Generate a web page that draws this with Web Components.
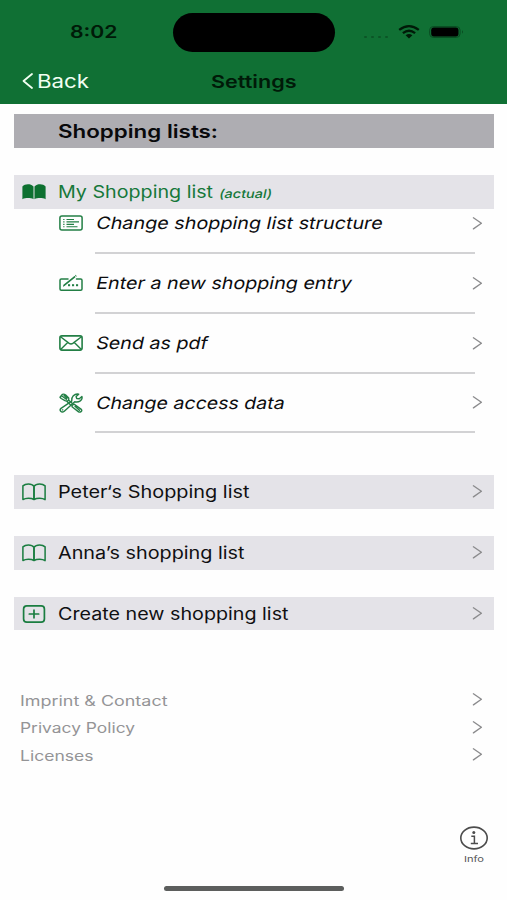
<!DOCTYPE html>
<html lang="en">
<head>
<meta charset="utf-8">
<title>Settings</title>
<style>
html,body{margin:0;background:#fefefe;overflow:hidden}
body{font-family:Inter,"Liberation Sans",sans-serif;color:#101012}
</style>
</head>
<body>
<settings-screen></settings-screen>
<script>
// Single line of text, set wide: the glyphs are stretched to the width given.
// With the slant attribute the upright glyphs are leaned to the right.
customElements.define('wide-text', class extends HTMLElement {
  connectedCallback() {
    if (this.shadowRoot) return;
    const w = +this.getAttribute('w'), s = this.getAttribute('size') || 17;
    this.attachShadow({mode:'open'}).innerHTML = `<style>
      :host{display:block;flex:none;width:${w}px;height:24px}
      span{display:inline-block;white-space:pre;font-size:${s}px;line-height:25.500px;transform-origin:0 75%}
    </style><span><slot></slot></span>`;
    const span = this.shadowRoot.querySelector('span');
    const slant = this.hasAttribute('slant');
    const k = (slant ? w - 1.5 : w) / span.getBoundingClientRect().width;
    span.style.transform = (slant ? 'skewX(-12deg) ' : '') + `scaleX(${k})`;
  }
});

const icons = {
  open: [24,18,'<path d="M12 3.2C10.6 1.3 8.6.9 6.4.9 4.2.9 2.4 1.4.9 2.9V16.6c1.7-1.2 3.5-1.4 5.5-1.4s4 .3 5.6 1.3c1.6-1 3.6-1.3 5.6-1.3s3.8.2 5.5 1.4V2.9C21.600 1.4 19.800.9 17.600.9 15.400.9 13.400 1.300 12 3.200ZV16.500" fill="none" stroke="#1a7d40" stroke-width="1.5" stroke-linejoin="round"/><path d="M12 3.200V16.500" stroke="#1a7d40" stroke-width="1.600"/>'],
  book: [24,16,'<path d="M11.500 2.500C10 .7 8 .2 6 .2 3.500.2 1.800.9.4 2.400V15.300c1.700-1 3.500-1.200 5.600-1.200 2.200 0 4 .2 5.500 1.200ZM12.500 2.500C14 .7 16 .2 18 .2c2.500 0 4.200.7 5.600 2.200V15.300c-1.700-1-3.500-1.200-5.600-1.200-2.200 0-4 .2-5.500 1.200Z" fill="#0d7030"/>'],
  list: [24,16,'<g fill="none" stroke="#237f45" stroke-width="1.500"><rect x=".9" y=".9" width="22.200" height="14.200" rx="2"/><path d="M7.500 4.500H15M7.500 6.900H20M7.500 9.300H15M7.500 11.700H18.500" stroke-width="1.150"/><path d="M4.200 4.500h1.300M4.200 6.900h1.300M4.200 9.300h1.300M4.200 11.700h1.300" stroke-width="1.150"/></g>'],
  entry: [24,16,'<g fill="none" stroke="#237f45" stroke-width="1.500" stroke-linecap="round"><path d="M9 4H2.300Q1 4 1 5.300V14Q1 15.200 2.300 15.200H21.700Q23 15.200 23 14V5.300Q23 4 21.700 4H17.500"/><path d="M5.300 10.200 15.600 1.800" stroke-width="1.700"/><path d="M4.700 11.200l.3-1" stroke-width="1"/></g><g fill="#237f45"><rect x="9" y="9.200" width="2.100" height="2"/><rect x="13" y="9.200" width="2.100" height="2"/><rect x="17" y="9.200" width="2.100" height="2"/></g><path d="M16.200.2l1.400 1" stroke="#237f45" stroke-width="1"/>'],
  mail: [24,16,'<g fill="none" stroke="#237f45" stroke-width="1.600" stroke-linejoin="round"><rect x=".9" y=".9" width="22.200" height="14.200" rx="2"/><path d="M1.500 1.700 10.200 8.400Q12 9.600 13.800 8.400L22.500 1.700M1.600 14.500 8.700 7.400M22.400 14.500 15.300 7.400" stroke-width="1.400"/></g>'],
  tools: [24,20,'<g fill="none" stroke="#237f45" stroke-width="1.400" stroke-linejoin="round" stroke-linecap="round"><path d="M1 4.200 3.500 1.300Q5 .7 6.700 2L9.700 5Q10.300 6.400 9 7.600 7.600 8.500 6 7.700L2.200 5.500ZM9.500 7l4.200 3.800M7.800 8.300l4.100 4M3.300 3.300l4 3M5 2.200l3 3"/><path d="M13.300 12.200 15.300 11.200 22.300 16.400Q23.400 17.600 22 18.600 20.700 19.700 19.300 18.600L13 13.700ZM16 13.200l4.500 4"/><path d="M12.700 8.200Q12.100 5 14.300 2.700 16.800.4 19.700 1.200L17.100 3.500 17.700 5.500 20.300 5.800 22.900 3.500Q23.700 6.100 21.300 7.900 18.900 9.600 15.700 8.800L5.300 18.200Q3.300 19.800 1.700 18.300 .4 16.900 2 15.300Z"/><path d="M3.400 16.900h.4"/></g>'],
  plus: [24,18,'<g fill="none" stroke="#1a7d40" stroke-width="1.700" stroke-linecap="round"><rect x="1.600" y=".9" width="20.800" height="16.200" rx="3.200"/><path d="M12 5.200V12.800M7.300 9H16.700"/></g>'],
  chev: [10,13,'<path d="M1.400 .8 9.400 6.300 1.400 11.900" fill="none" stroke="#8b8b8d" stroke-width="1.350" stroke-linecap="round" stroke-linejoin="round"/>'],
  back: [11,16,'<path d="M10 1 1.500 8 10 15" fill="none" stroke="#f2fff2" stroke-width="1.800" stroke-linecap="round" stroke-linejoin="round"/>'],
  info: [28,24,'<ellipse cx="14" cy="12" rx="13.200" ry="10.900" fill="none" stroke="#4c4c4c" stroke-width="1.600"/><circle cx="13.800" cy="6.500" r="1.500" fill="#4c4c4c"/><path d="M11.300 10.300H14.400V17.300M10.800 17.600H18" fill="none" stroke="#4c4c4c" stroke-width="1.500"/>'],
  wifi: [22,14,'<g fill="none" stroke="#001a08" stroke-width="2.300"><path d="M1.200 4.900Q11-2.700 20.800 4.900"/><path d="M4.900 8.200Q11 3.400 17.100 8.200"/></g><path d="M7.600 10.300Q11 7.700 14.400 10.300L11 13.500Z" fill="#001a08"/>'],
  battery: [36,12,'<rect x=".6" y=".6" width="30.500" height="10.800" rx="3.600" fill="none" stroke="#0a4c22"/><rect x="2.200" y="1.600" width="27.300" height="8.800" rx="2.600" fill="#000"/><path d="M33 4.300q2 1.700 0 3.400z" fill="#0a4c22"/>']
};
customElements.define('app-icon', class extends HTMLElement {
  connectedCallback() {
    if (this.shadowRoot) return;
    const [w,h,art] = icons[this.getAttribute('name')];
    this.attachShadow({mode:'open'}).innerHTML = `<style>
      :host{display:block;flex:none;width:${w}px;height:${h}px} svg{display:block;overflow:visible}
    </style><svg width="${w}" height="${h}" viewBox="0 0 ${w} ${h}">${art}</svg>`;
  }
});

customElements.define('status-bar', class extends HTMLElement {
  connectedCallback() {
    this.attachShadow({mode:'open'}).innerHTML = `<style>
      :host{display:grid;grid-template-columns:173px 162px 1fr;align-items:center;height:64px;color:#001a08}
      .time{padding-left:69.500px;font-weight:600}
      .island{height:39px;border-radius:20px;background:#000}
      .right{display:flex;align-items:center;padding-left:29px}
      .dots{display:flex;gap:4px;padding-top:9px;margin-right:10px}
      .dots i{width:3px;height:2px;border-radius:1px;background:#0b5526}
      app-icon+app-icon{margin-left:9px}
    </style>
    <div class="time"><wide-text w="47.500" size="17">8:02</wide-text></div>
    <div class="island"></div>
    <div class="right"><div class="dots"><i></i><i></i><i></i><i></i></div>
      <app-icon name="wifi"></app-icon><app-icon name="battery"></app-icon></div>`;
  }
});

customElements.define('nav-bar', class extends HTMLElement {
  connectedCallback() {
    this.attachShadow({mode:'open'}).innerHTML = `<style>
      :host{display:flex;align-items:center;height:34px;padding:0 0 6px 22px}
      .back{display:flex;align-items:center;gap:4px;color:#f2fff2;width:189px}
      .title{font-weight:600;color:#001a08}
    </style>
    <div class="back"><app-icon name="back"></app-icon><wide-text w="52" size="18.500">Back</wide-text></div>
    <wide-text class="title" w="85.500" size="17.500"><slot></slot></wide-text>`;
  }
});

customElements.define('list-bar', class extends HTMLElement {
  connectedCallback() {
    const icon = this.getAttribute('icon');
    this.attachShadow({mode:'open'}).innerHTML = `<style>
      :host{display:flex;align-items:center;height:33.400px;box-sizing:border-box;padding:0 12px 0 8px;background:#e4e3e8}
      :host([heading]){background:#aeadb2;font-weight:600;color:#09090b}
      :host([current]){color:#16783a}
      .icon{width:36px;flex:none}
      .label{display:flex;align-items:center;flex:1}
    </style>
    <div class="icon">${icon ? `<app-icon name="${icon}"></app-icon>` : ''}</div>
    <div class="label"><slot></slot></div>
    ${this.hasAttribute('link') ? '<app-icon name="chev"></app-icon>' : ''}`;
  }
});

customElements.define('action-row', class extends HTMLElement {
  connectedCallback() {
    this.attachShadow({mode:'open'}).innerHTML = `<style>
      :host{display:block;height:59.850px;color:#0c0c0e}
      .line{display:flex;align-items:center;height:29.500px;padding:0 12px 0 45px}
      .icon{width:36px;flex:none}
      .label{flex:1}
      hr{border:0;height:2px;margin:13.800px 19.500px 0 81px;background:#d2d2d4}
    </style>
    <div class="line"><div class="icon"><app-icon name="${this.getAttribute('icon')}"></app-icon></div>
    <div class="label"><slot></slot></div><app-icon name="chev"></app-icon></div><hr>`;
  }
});

customElements.define('footer-link', class extends HTMLElement {
  connectedCallback() {
    this.attachShadow({mode:'open'}).innerHTML = `<style>
      :host{display:flex;align-items:center;justify-content:space-between;height:27.500px;padding:0 12px 0 6px;color:#949496}
    </style><slot></slot><app-icon name="chev"></app-icon>`;
  }
});

customElements.define('info-tab', class extends HTMLElement {
  connectedCallback() {
    this.attachShadow({mode:'open'}).innerHTML = `<style>
      :host{display:flex;flex-direction:column;align-items:center;width:28px;color:#555}
      wide-text{margin-top:-4px}
    </style><app-icon name="info"></app-icon><wide-text w="20" size="8"><slot></slot></wide-text>`;
  }
});

customElements.define('settings-screen', class extends HTMLElement {
  connectedCallback() {
    this.attachShadow({mode:'open'}).innerHTML = `<style>
      :host{display:flex;flex-direction:column;width:507px;height:900px}
      header{background:#107034;height:103.700px;flex:none}
      main{padding:10.600px 13px 0 14px}
      .current{margin-top:27.500px}
      .others{display:grid;gap:27.600px;margin-top:27.200px}
      .links{margin-top:55.300px}
      info-tab{margin:57.300px 19px 0 auto}
      .home{width:180px;height:5px;border-radius:3px;background:#5c5e5d;margin:16px auto 0 164px}
      .small{margin:3px 0 0 5px;font-weight:500}
    </style>
    <header><status-bar></status-bar><nav-bar>Settings</nav-bar></header>
    <main>
      <list-bar heading><wide-text w="160" size="18">Shopping lists:</wide-text></list-bar>
      <section class="current">
        <list-bar icon="book" current><wide-text w="155" size="17">My Shopping list</wide-text><wide-text class="small" slant w="54.500" size="12">(actual)</wide-text></list-bar>
        <action-row icon="list"><wide-text slant w="288">Change shopping list structure</wide-text></action-row>
        <action-row icon="entry"><wide-text slant w="257">Enter a new shopping entry</wide-text></action-row>
        <action-row icon="mail"><wide-text slant w="113">Send as pdf</wide-text></action-row>
        <action-row icon="tools"><wide-text slant w="190">Change access data</wide-text></action-row>
      </section>
      <section class="others">
        <list-bar icon="open" link><wide-text w="191.500">Peter‘s Shopping list</wide-text></list-bar>
        <list-bar icon="open" link><wide-text w="186.500">Anna’s shopping list</wide-text></list-bar>
        <list-bar icon="plus" link><wide-text w="230.500">Create new shopping list</wide-text></list-bar>
      </section>
      <section class="links">
        <footer-link><wide-text w="147.500" size="14">Imprint &amp; Contact</wide-text></footer-link>
        <footer-link><wide-text w="115" size="14">Privacy Policy</wide-text></footer-link>
        <footer-link><wide-text w="73.500" size="14">Licenses</wide-text></footer-link>
      </section>
    </main>
    <info-tab>Info</info-tab>
    <div class="home"></div>`;
  }
});
</script>
</body>
</html>
